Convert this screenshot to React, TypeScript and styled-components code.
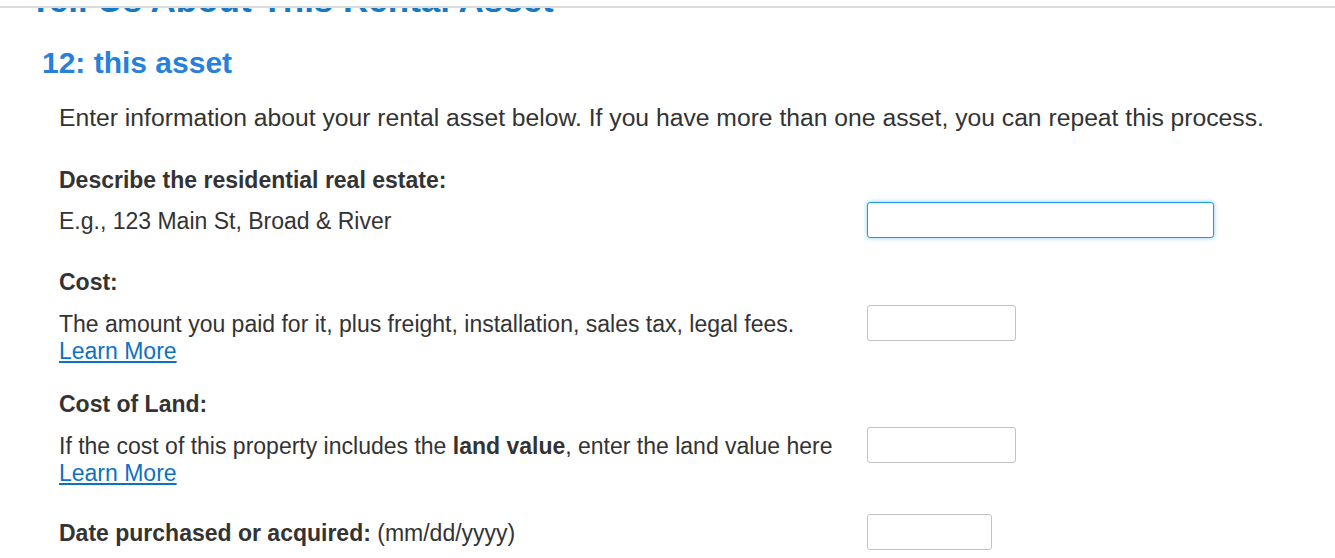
import React from "react";
import styled, { createGlobalStyle } from "styled-components";

const GlobalStyle = createGlobalStyle`
  html, body {
    margin: 0;
    padding: 0;
    background: #ffffff;
  }
  body {
    font-family: "Liberation Sans", Arial, Helvetica, sans-serif;
    color: #333333;
  }
`;

const Page = styled.div`
  height: 100vh;
  display: flex;
  flex-direction: column;
  overflow: hidden;
`;

const TopBar = styled.div`
  flex-shrink: 0;
  height: 6px;
  background: #ffffff;
  border-bottom: 2px solid #dcdcdc;
  position: relative;
  z-index: 1;
`;

const Content = styled.div`
  flex: 1;
  overflow: hidden;
  padding-left: 30px;
`;

const PageTitle = styled.h1`
  margin: -29px 0 0 0;
  font-size: 35px;
  line-height: 42px;
  font-weight: 700;
  color: #1479c6;
`;

const SectionTitle = styled.h2`
  margin: 24px 0 0 12px;
  font-size: 30px;
  line-height: 36px;
  font-weight: 700;
  color: #2680dc;
`;

const Form = styled.div`
  padding-left: 29px;
  font-size: 23px;
  line-height: 1.2;
`;

const Intro = styled.p`
  margin: 22px 0 34px 0;
  font-size: 24.7px;
`;

const Field = styled.div<{ $gap: number }>`
  margin-bottom: ${(p) => p.$gap}px;
`;

const Label = styled.div`
  font-weight: 700;
  margin-bottom: 14px;
`;

const Row = styled.div`
  display: grid;
  grid-template-columns: 792px auto;
  column-gap: 16px;
  align-items: start;
`;

const Description = styled.div``;

const Strong = styled.b`
  font-weight: 700;
`;

const Link = styled.a`
  display: block;
  color: #0b72c4;
  text-decoration: underline;
  cursor: pointer;
`;

const TextInput = styled.input<{ $width: number; $offset?: number; $focused?: boolean }>`
  box-sizing: border-box;
  width: ${(p) => p.$width}px;
  height: 36px;
  margin: ${(p) => -(p.$offset ?? 6)}px 0 0 0;
  padding: 4px 8px;
  font: inherit;
  font-size: 18px;
  background: #ffffff;
  border: 1px solid ${(p) => (p.$focused ? "#1a9fe6" : "#c2c2c2")};
  border-radius: 3px;
  box-shadow: ${(p) => (p.$focused ? "0 0 4px rgba(26, 159, 230, 0.55)" : "none")};
  outline: none;
`;

export default function App() {
  return (
    <Page>
      <GlobalStyle />
      <TopBar />
      <Content>
        <PageTitle>Tell Us About This Rental Asset</PageTitle>
        <SectionTitle>12: this asset</SectionTitle>
        <Form>
          <Intro>
            Enter information about your rental asset below. If you have more
            than one asset, you can repeat this process.
          </Intro>

          <Field $gap={31}>
            <Label>Describe the residential real estate:</Label>
            <Row>
              <Description>E.g., 123 Main St, Broad &amp; River</Description>
              <TextInput $width={347} $focused />
            </Row>
          </Field>

          <Field $gap={25}>
            <Label>Cost:</Label>
            <Row>
              <Description>
                The amount you paid for it, plus freight, installation, sales
                tax, legal fees.
                <Link>Learn More</Link>
              </Description>
              <TextInput $width={149} />
            </Row>
          </Field>

          <Field $gap={32}>
            <Label>Cost of Land:</Label>
            <Row>
              <Description>
                If the cost of this property includes the{" "}
                <Strong>land value</Strong>, enter the land value here
                <Link>Learn More</Link>
              </Description>
              <TextInput $width={149} />
            </Row>
          </Field>

          <Field $gap={0}>
            <Row>
              <Description>
                <Strong>Date purchased or acquired:</Strong> (mm/dd/yyyy)
              </Description>
              <TextInput $width={125} />
            </Row>
          </Field>
        </Form>
      </Content>
    </Page>
  );
}
